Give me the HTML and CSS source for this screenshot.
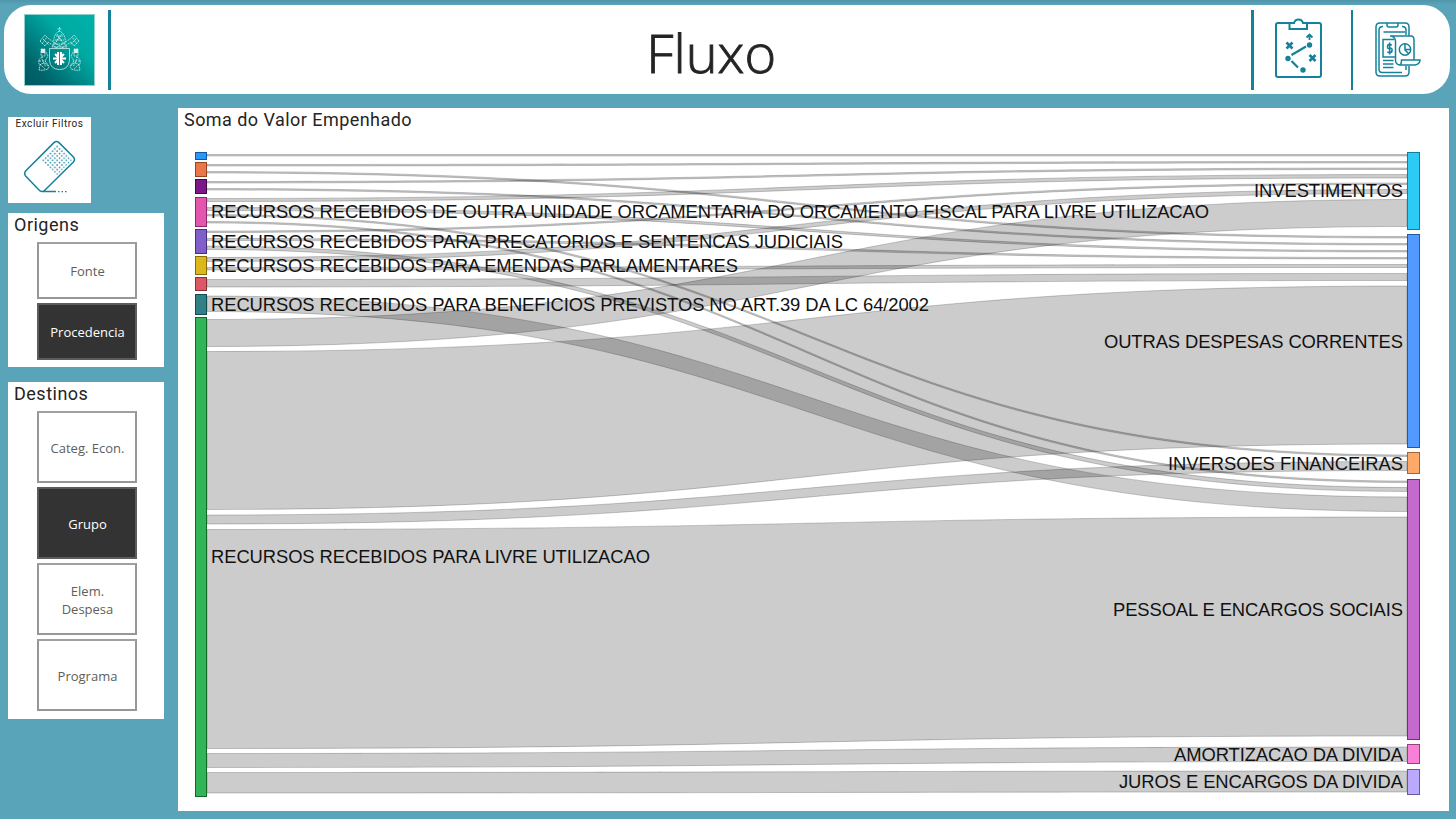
FILE: index.html
```html
<!DOCTYPE html>
<html lang="pt-BR">
<head>
<meta charset="utf-8">
<title>Fluxo</title>
<link rel="stylesheet" href="styles.css">
</head>
<body>
<header class="header">
  <svg class="crest" viewBox="0 0 71 72">
    <defs>
      <linearGradient id="crestFill" x1="0" y1="1" x2="1" y2="0">
        <stop offset="0" stop-color="#00585e"/><stop offset=".2" stop-color="#00636a"/><stop offset=".65" stop-color="#00aaa3"/><stop offset="1" stop-color="#00b2aa"/>
      </linearGradient>
    </defs>
    <rect width="71" height="72" fill="url(#crestFill)"/>
    <rect x=".5" y=".5" width="70" height="71" fill="none" stroke="#8fd0cf"/>
    <g fill="none" stroke="#d8f1ef" stroke-width=".75">
      <path d="M35.500 13v5M33.500 15h4M30 30c-1-6 1-11 5.500-13 4.500 2 6.500 7 5.500 13zM31 26h9M32 22h7M30 30l-2 3h15l-2-3" stroke-dasharray="2 .7"/>
      <path d="M31 30l4-7 5 7M33 20l5 8M38 20l-6 8" stroke-dasharray="1.500 .8"/>
      <path d="M16 27l5-6 4 4 14 9M18 30l5-7M16 27l5 5 3-4 9 6M19 25l6 6M55 27l-5-6-4 4-14 9M53 30l-5-7M55 27l-5 5-3-4-9 6M52 25l-6 6" stroke-dasharray="2 .8"/>
      <path d="M25.500 34.500h20v12q-1 9-10 9t-10-9z"/>
      <path d="M17 35h4v7h-4zM19 43c-5 1-5 6-3 8 3-3 7-2 8 1 3 3-4 5-9 4l1-5M22 38l2 4-3 5 4 5M54 35h-4v7h4zM52 43c5 1 5 6 3 8-3-3-7-2-8 1-3 3 4 5 9 4l-1-5M49 38l-2 4 3 5-4 5" stroke-dasharray="2 .6"/>
      <path d="M15 47h7M16 50l5 5M18 45l4 8M56 47h-7M55 50l-5 5M53 45l-4 8" stroke-dasharray="2 1"/>
    </g>
    <path d="M17 35h4v4h-4zM50 35h4v4h-4z" fill="#d8f1ef"/>
    <g stroke="#fff" stroke-width="2"><path d="M34 38v13M37 38v13M29 44.500h13M31 40l9 9M40 40l-9 9"/></g>
    <path d="M35.500 37v15" stroke="#009795" stroke-width="1"/>
  </svg>
  <span class="rule"></span>
  <h1 class="title">Fluxo</h1>
  <span class="rule"></span>
  <svg class="icon icon-plan" viewBox="0 0 50 62">
    <g fill="none" stroke="#15819b" stroke-width="2">
      <path d="M16 5H5Q3 5 3 7V57Q3 59 5 59H46Q48 59 48 57V7Q48 5 46 5H34"/>
      <path d="M16.500 5V11H34V5H30Q29 1.500 25.500 1.500T21 5Z"/>
      <path d="M18.500 37L33 28.500M18.500 43L25 49.500" stroke-width="2.200"/>
      <path d="M36.500 22V17M33.500 19.500L36.500 16.500L39.500 19.500" stroke-width="1.800"/>
      <path d="M13.500 24.500l6 6M19.500 24.500l-6 6M36.500 37l6 6M42.500 37l-6 6" stroke-width="2.600"/>
    </g>
    <g fill="#15819b"><circle cx="36.500" cy="27" r="2.700"/><circle cx="15" cy="40.500" r="2.700"/><circle cx="30" cy="52" r="2.700"/></g>
  </svg>
  <span class="rule"></span>
  <svg class="icon icon-report" viewBox="0 0 48 58">
    <g fill="none" stroke="#15819b" stroke-width="1.500">
      <path d="M35 15V6Q35 2 31 2H6Q2 2 2 6V51Q2 55 6 55H31Q35 55 35 51V45" />
      <path d="M9 5.500Q5 5.500 5 9V48Q5 51.500 8 51.500H28M13 2V4Q13 6 15 6H22Q24 6 24 4V2M28 5.500Q32 5.500 32 9V14M9.500 11H31M32 45V49"/>
      <path d="M20 18.500H9V36H21"/>
      <path d="M16 15H37Q40 15 40 19V39M17 15Q21 16 21.500 20V40Q22 43.500 26 44H41Q46 43 46 39H27.500Q27.500 44 25 44"/>
      <path d="M9 39.500H19.500M9 43H19.500M9 46.500H19.500"/>
      <circle cx="31" cy="28.500" r="5.700"/><path d="M31 22.500V29L35 33M31 28.500H36.500"/>
      <path d="M18 24Q13.500 22.500 13.500 25.500T16 27.500T18 30Q17.500 32.500 13.300 31M15.700 21.500V33.500" stroke-width="1.600"/>
    </g>
  </svg>
</header>
<div class="board">
  <aside class="sidebar">
    <section class="clear">
      <h2 class="clear-title">Excluir Filtros</h2>
      <svg class="eraser" viewBox="0 0 54 54">
        <defs><pattern id="dots" width="4.600" height="4.600" patternUnits="userSpaceOnUse" patternTransform="translate(1 1)"><circle cx="1" cy="1" r=".85" fill="#15819b"/><circle cx="3.300" cy="3.300" r=".85" fill="#15819b"/></pattern></defs>
        <path d="M18 20L34 4L49 20L34 35Z" fill="url(#dots)"/>
        <path d="M31 2.600Q33.500 .4 36 2.600L50.400 17Q52.500 19.500 50.400 22L21.500 50.500Q19 52.500 16.500 50.500L2.600 36Q.8 33.500 2.600 31ZM19 51.600H33" fill="none" stroke="#15819b" stroke-width="1.500"/>
        <path d="M35 51.600h10" stroke="#15819b" stroke-width="1.400" stroke-dasharray="1.500 2" fill="none"/>
      </svg>
    </section>
    <section class="panel origins">
      <h2 class="panel-title">Origens</h2>
      <div class="options">
        <button class="option">Fonte</button>
        <button class="option selected">Procedencia</button>
      </div>
    </section>
    <section class="panel targets">
      <h2 class="panel-title">Destinos</h2>
      <div class="options">
        <button class="option">Categ. Econ.</button>
        <button class="option selected">Grupo</button>
        <button class="option">Elem.<br>Despesa</button>
        <button class="option">Programa</button>
      </div>
    </section>
  </aside>
  <main class="chart-card">
    <h2 class="chart-title">Soma do Valor Empenhado</h2>
    <svg id="sankey" class="chart" viewBox="178 134 1271 677"></svg>
  </main>
</div>
<script src="sankey.js"></script>
</body>
</html>
```
FILE: styles.css
```css
* { box-sizing: border-box; }
body {
  margin: 0;
  width: 1456px;
  height: 819px;
  overflow: hidden;
  padding: 5px 7px 8px 4px;
  background: linear-gradient(#4f96aa, #5aa4b9 5px);
  font-family: "Open Sans", "Noto Sans", sans-serif;
  color: #252423;
}
h1, h2 { margin: 0; font-weight: 400; }
.header {
  display: flex;
  align-items: center;
  height: 89px;
  width: 1446px;
  padding-left: 20px;
  background: #fff;
  border-radius: 27px;
}
.crest { width: 71px; height: 72px; margin-right: 13px; }
.rule { width: 2.500px; height: 80px; background: #15819b; flex: none; }
.title {
  flex: 1;
  text-align: center;
  font-size: 54px;
  line-height: 80px;
  padding: 4px 0 0 61px;
  font-weight: 300;
  -webkit-text-stroke: .9px #252423;
}
.icon-plan { width: 50px; height: 62px; margin: -2px 28px 0 19px; }
.icon-report { width: 48px; height: 58px; margin: 0 28px 0 21px; }
.board { display: flex; gap: 14px; margin-top: 14px; padding-left: 4px; }
.sidebar { width: 156px; padding-top: 9px; }
.clear {
  display: flex;
  flex-direction: column;
  align-items: center;
  width: 83px;
  height: 86px;
  background: #fff;
}
.clear-title { font: 400 10px/13px Roboto, sans-serif; letter-spacing: .55px; white-space: nowrap; }
.eraser { width: 54px; height: 54px; margin: 10px 0 0 1px; }
.panel { background: #fff; padding-left: 6px; }
.origins { height: 154px; margin-top: 10px; }
.targets { height: 337px; margin-top: 15px; }
.panel-title { font: 400 18px/24px Roboto, sans-serif; letter-spacing: .5px; }
.options { display: flex; flex-direction: column; gap: 4px; width: 100px; margin: 5px 0 0 23px; }
.option {
  height: 57px;
  padding: 1px 0 0 1px;
  border: 2px solid #979797;
  border-top-color: #a0a0a0;
  background: #fff;
  color: #605e5c;
  font: 400 13px/18px "Open Sans", sans-serif;
}
.targets .option { height: 72px; }
.option.selected { background: #333; color: #fff; border-color: #5c5c5c; }
.chart-card { width: 1271px; height: 703px; background: #fff; }
.chart-title { height: 26px; padding-left: 6px; font: 400 18px/24px Roboto, sans-serif; letter-spacing: .45px; }
.chart { display: block; width: 1271px; height: 677px; }
.link { fill: #000; fill-opacity: .2; stroke: #000; stroke-opacity: .2; stroke-width: 1px; }
.label { font: 18.400px "Liberation Sans", Arial, sans-serif; fill: #111; }
.label.end { text-anchor: end; }
```
FILE: sankey.js
```javascript
const svg = document.getElementById("sankey");
const NS = "http://www.w3.org/2000/svg";
const LEFT = 207, RIGHT = 1407, MID = 807;

function add(tag, attrs, text) {
  const el = document.createElementNS(NS, tag);
  for (const k in attrs) el.setAttribute(k, attrs[k]);
  if (text) el.textContent = text;
  svg.appendChild(el);
}

// source top, source bottom, target top, target bottom
const links = [
  [154.500, 156, 154.500, 156],
  [164.500, 166, 161.500, 163],
  [171.500, 173, 236.500, 238],
  [181.500, 183, 168, 169.500],
  [188.500, 190, 243.500, 245],
  [198.500, 201.500, 174.500, 178],
  [207.500, 210.500, 250.500, 252],
  [214.500, 216, 455, 456.500],
  [221.500, 223, 481, 482.500],
  [231, 232.500, 183, 184.500],
  [238.500, 240.500, 257.500, 259],
  [246, 249.500, 487.500, 491.500],
  [257.500, 261.500, 189.500, 193.500],
  [267.500, 270, 264.500, 267.500],
  [279.500, 287, 273.500, 280.500],
  [296, 311.500, 497, 511.500],
  [319.500, 346.500, 199.500, 226.500],
  [351.500, 509.500, 286, 444],
  [515, 524, 461.500, 470.500],
  [529.500, 748.500, 517, 736],
  [753.500, 767.500, 747, 761.500],
  [772.500, 793, 771, 792]
];
for (const [a, b, c, d] of links) {
  add("path", { class: "link", d: `M${LEFT} ${a}C${MID} ${a} ${MID} ${c} ${RIGHT} ${c}V${d}C${MID} ${d} ${MID} ${b} ${LEFT} ${b}Z` });
}

// x, y, height, fill, border
const nodes = [
  [195, 152, 8, "#2896fc", "#11589c"],
  [195, 162, 15, "#e8784b", "#97431f"],
  [195, 179, 15, "#7b1887", "#3d0846"],
  [195, 197, 30, "#e356ae", "#8f286a"],
  [195, 229, 25, "#8060c8", "#45307e"],
  [195, 256, 19, "#dcb81c", "#846c08"],
  [195, 277, 14, "#db5964", "#87303a"],
  [195, 294, 21, "#318086", "#124c50"],
  [195, 317, 480, "#31b557", "#126828"],
  [1407, 152, 78, "#2ccbf5", "#147d9b"],
  [1407, 234, 214, "#529aff", "#255a9e"],
  [1407, 452, 22, "#ffa968", "#9a663c"],
  [1407, 479, 261, "#c469ce", "#6d3574"],
  [1407, 744, 20, "#f880d6", "#934379"],
  [1407, 769, 26, "#bba8ff", "#66589a"]
];
for (const [x, y, h, fill, stroke] of nodes) {
  const w = x === RIGHT ? 12 : 11;
  add("rect", { x: x + .5, y: y + .5, width: w, height: h - 1, fill, stroke });
}

// text, x, baseline, drawn width
const labels = [
  ["RECURSOS RECEBIDOS DE OUTRA UNIDADE ORCAMENTARIA DO ORCAMENTO FISCAL PARA LIVRE UTILIZACAO", 211, 218, 998],
  ["RECURSOS RECEBIDOS PARA PRECATORIOS E SENTENCAS JUDICIAIS", 211, 248, 632],
  ["RECURSOS RECEBIDOS PARA EMENDAS PARLAMENTARES", 211, 272, 527],
  ["RECURSOS RECEBIDOS PARA BENEFICIOS PREVISTOS NO ART.39 DA LC 64/2002", 211, 311, 718],
  ["RECURSOS RECEBIDOS PARA LIVRE UTILIZACAO", 211, 563, 439],
  ["INVESTIMENTOS", 1403, 197, 149],
  ["OUTRAS DESPESAS CORRENTES", 1403, 348, 299],
  ["INVERSOES FINANCEIRAS", 1403, 470, 235],
  ["PESSOAL E ENCARGOS SOCIAIS", 1403, 616, 290],
  ["AMORTIZACAO DA DIVIDA", 1403, 761, 229],
  ["JUROS E ENCARGOS DA DIVIDA", 1403, 788, 284]
];
for (const [text, x, y, w] of labels) {
  add("text", { class: x > MID ? "label end" : "label", x, y, textLength: w }, text);
}
```
